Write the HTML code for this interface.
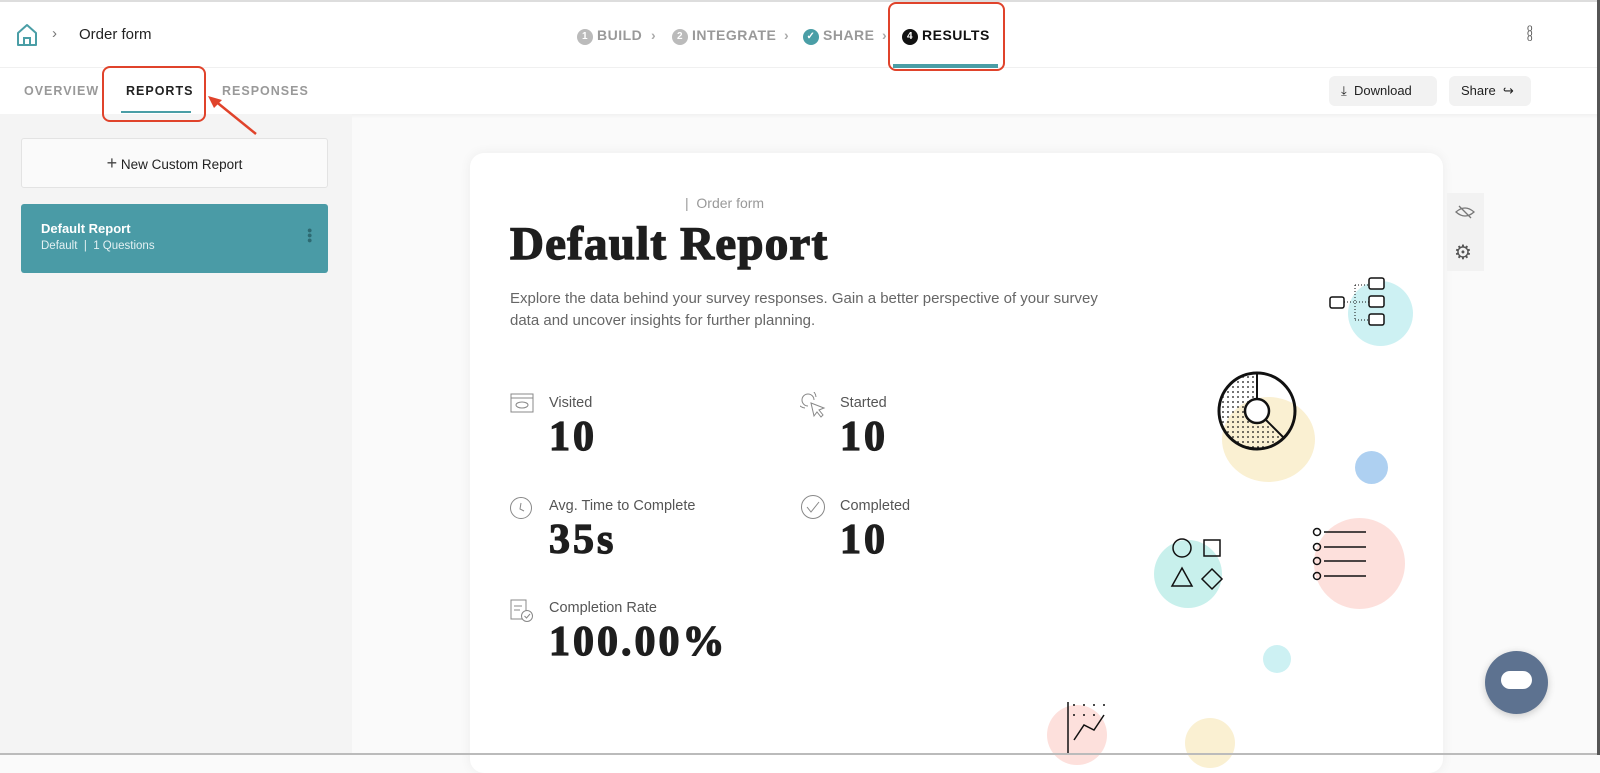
<!DOCTYPE html>
<html><head><meta charset="utf-8"><style>
*{box-sizing:border-box;margin:0;padding:0}
body{width:1600px;height:755px;overflow:hidden;background:#fafafa;font-family:"Liberation Sans",sans-serif;position:relative;color:#222}
.abs{position:absolute}
.hdr{left:0;top:0;width:1600px;height:68px;background:#fff;border-top:2px solid #ddd;border-bottom:1px solid #f0f0f0}
.tabs{left:0;top:68px;width:1600px;height:46px;background:#fff;box-shadow:0 2px 4px rgba(0,0,0,.04)}
.side{left:0;top:114px;width:352px;height:641px;background:#f4f4f4}
.step{top:27px;font-size:14px;letter-spacing:.5px;color:#999;font-weight:bold}
.num{display:inline-block;width:16px;height:16px;border-radius:50%;background:#bbb;color:#fff;font-size:10px;text-align:center;line-height:16px;vertical-align:1px;margin-right:4px}
.tab{top:84px;font-size:12.5px;font-weight:bold;letter-spacing:1px;color:#999}
.btn{top:76px;height:30px;background:#f2f2f2;border-radius:6px;font-size:13px;line-height:30px;color:#222}
.red{border:2px solid #e0432b;border-radius:8px}
.card{left:470px;top:153px;width:973px;height:620px;background:#fff;border-radius:14px;box-shadow:0 0 12px rgba(0,0,0,.06)}
.lbl{font-size:14.5px;color:#555}
.val{font-family:"Liberation Serif",serif;font-weight:bold;font-size:42px;letter-spacing:3px;color:#1e1e1e;-webkit-text-stroke:1.3px #1e1e1e}
.circ{border-radius:50%}
</style></head><body>
<div class="abs hdr"></div>
<svg class="abs" style="left:16px;top:23px" width="22" height="24" viewBox="0 0 22 24"><path d="M2 10 L11 2 L20 10 V22 H2 Z" fill="none" stroke="#4a9ea6" stroke-width="2" stroke-linejoin="round"/><path d="M8 22 V15 H14 V22" fill="none" stroke="#4a9ea6" stroke-width="2"/></svg>
<div class="abs" style="left:52px;top:25px;color:#777;font-size:15px">&#8250;</div>
<div class="abs" style="left:79px;top:26px;font-size:15px;color:#222">Order form</div>
<div class="abs step" style="left:577px"><span class="num">1</span>BUILD</div>
<div class="abs step" style="left:651px;color:#aaa">&#8250;</div>
<div class="abs step" style="left:672px"><span class="num">2</span>INTEGRATE</div>
<div class="abs step" style="left:784px;color:#aaa">&#8250;</div>
<div class="abs step" style="left:803px"><span class="num" style="background:#4a9ea6">&#10003;</span>SHARE</div>
<div class="abs step" style="left:882px;color:#aaa">&#8250;</div>
<div class="abs step" style="left:902px;color:#111"><span class="num" style="background:#111">4</span>RESULTS</div>
<div class="abs" style="left:893px;top:64px;width:105px;height:4px;background:#4a9ea6"></div>
<div class="abs" style="left:1527px;top:26px;font-size:10px;line-height:5px;color:#555">o<br>o<br>o</div>
<div class="abs tabs"></div>
<div class="abs tab" style="left:24px">OVERVIEW</div>
<div class="abs tab" style="left:126px;color:#222">REPORTS</div>
<div class="abs" style="left:121px;top:111px;width:70px;height:2px;background:#4a9ea6"></div>
<div class="abs tab" style="left:222px">RESPONSES</div>
<div class="abs btn" style="left:1329px;width:108px;padding-left:12px">&#10515; &nbsp;Download</div>
<div class="abs btn" style="left:1449px;width:82px;padding-left:12px">Share &nbsp;&#8618;</div>
<div class="abs side"></div>
<div class="abs" style="left:21px;top:138px;width:307px;height:50px;background:#fafafa;border:1px solid #e3e3e3;border-radius:3px;text-align:center;line-height:48px;font-size:13.5px"><span style="font-size:18px;color:#444">+</span> New Custom Report</div>
<div class="abs" style="left:21px;top:204px;width:307px;height:69px;background:#4a9ba6;border-radius:3px;color:#fff">
<div style="position:absolute;left:20px;top:17px;font-size:13px;font-weight:bold">Default Report</div>
<div style="position:absolute;left:20px;top:36px;font-size:11.5px;color:#e3f0f2">Default &nbsp;| &nbsp;1 Questions</div>
<div style="position:absolute;left:286px;top:24px;font-size:9px;line-height:5px;color:#2d6a72">&#9679;<br>&#9679;<br>&#9679;</div></div>
<div class="abs red" style="left:888px;top:2px;width:117px;height:69px"></div>
<div class="abs red" style="left:102px;top:66px;width:104px;height:56px"></div>
<svg class="abs" style="left:200px;top:90px" width="60" height="50"><path d="M56 44 L14 10" stroke="#e0432b" stroke-width="2.5"/><path d="M8 6 L22 10 L14 18 Z" fill="#e0432b"/></svg>
<div class="abs card"></div>
<div class="abs" style="left:1447px;top:193px;width:37px;height:78px;background:#f2f2f2"></div>
<svg class="abs" style="left:1455px;top:204px" width="20" height="16"><path d="M1 8 Q10 0 19 8 Q10 16 1 8 Z" fill="none" stroke="#777" stroke-width="1.3"/><line x1="4" y1="2" x2="16" y2="14" stroke="#777" stroke-width="1.3"/></svg>
<div class="abs" style="left:1454px;top:240px;font-size:20px;color:#555">&#9881;</div>
<div class="abs" style="left:685px;top:195px;font-size:14px;color:#999">| &nbsp;Order form</div>
<div class="abs" style="left:510px;top:217px;font-family:'Liberation Serif',serif;font-weight:bold;font-size:47px;letter-spacing:1.2px;color:#1e1e1e;-webkit-text-stroke:1.4px #1e1e1e">Default Report</div>
<div class="abs" style="left:510px;top:288px;width:600px;font-size:15px;line-height:22px;color:#666">Explore the data behind your survey responses. Gain a better perspective of your survey data and uncover insights for further planning.</div>
<svg class="abs" style="left:510px;top:392px" width="24" height="22"><rect x="1" y="2" width="22" height="18" fill="none" stroke="#888"/><line x1="1" y1="6" x2="23" y2="6" stroke="#888"/><ellipse cx="12" cy="13" rx="6" ry="3" fill="none" stroke="#888"/></svg>
<div class="abs lbl" style="left:549px;top:395px">Visited</div>
<div class="abs val" style="left:549px;top:413px">10</div>
<svg class="abs" style="left:800px;top:392px" width="26" height="26"><path d="M14 8 A6 6 0 1 0 8 14 M16 5 A10 10 0 1 0 5 16" fill="none" stroke="#888"/><path d="M11 11 L24 16 L19 18 L23 23 L21 25 L17 20 L14 24 Z" fill="#fff" stroke="#888"/></svg>
<div class="abs lbl" style="left:840px;top:395px">Started</div>
<div class="abs val" style="left:840px;top:413px">10</div>
<svg class="abs" style="left:509px;top:496px" width="24" height="24"><circle cx="12" cy="12" r="10.5" fill="none" stroke="#888"/><path d="M12 7 L11 13 L15 15" fill="none" stroke="#888"/></svg>
<div class="abs lbl" style="left:549px;top:498px">Avg. Time to Complete</div>
<div class="abs val" style="left:549px;top:516px">35s</div>
<svg class="abs" style="left:800px;top:494px" width="26" height="26"><circle cx="13" cy="13" r="11.5" fill="none" stroke="#888"/><path d="M7 13 L11 18 L19 8" fill="none" stroke="#888"/></svg>
<div class="abs lbl" style="left:840px;top:498px">Completed</div>
<div class="abs val" style="left:840px;top:516px">10</div>
<svg class="abs" style="left:509px;top:597px" width="26" height="26"><rect x="2" y="3" width="15" height="19" fill="none" stroke="#888"/><line x1="5" y1="9" x2="13" y2="9" stroke="#888"/><line x1="5" y1="13" x2="11" y2="13" stroke="#888"/><circle cx="18" cy="19" r="5.5" fill="#fff" stroke="#888"/><path d="M15.5 19 L17.5 21 L21 17" fill="none" stroke="#888"/></svg>
<div class="abs lbl" style="left:549px;top:600px">Completion Rate</div>
<div class="abs val" style="left:549px;top:618px">100.00%</div>
<div class="abs circ" style="left:1348px;top:281px;width:65px;height:65px;background:#cdf1f3"></div>
<svg class="abs" style="left:1328px;top:275px" width="60" height="60"><g fill="#fff" stroke="#111" stroke-width="1.5"><rect x="2" y="22" width="14" height="11" rx="2"/><rect x="41" y="3" width="15" height="11" rx="2"/><rect x="41" y="21" width="15" height="11" rx="2"/><rect x="41" y="39" width="15" height="11" rx="2"/></g><path d="M16 27 H41 M27 10 V45 M27 10 H41 M27 45 H41" stroke="#111" stroke-dasharray="1 2"/></svg>
<div class="abs circ" style="left:1222px;top:397px;width:93px;height:85px;background:#faf0d2"></div>
<svg class="abs" style="left:1216px;top:370px" width="84" height="84"><defs><pattern id="d" width="5" height="5" patternUnits="userSpaceOnUse"><circle cx="2" cy="2" r=".9" fill="#111"/></pattern></defs><circle cx="41" cy="41" r="38" fill="none" stroke="#111" stroke-width="3"/><path d="M41 3 A38 38 0 1 0 68 68 L41 41 Z" fill="url(#d)"/><line x1="41" y1="3" x2="41" y2="41" stroke="#111" stroke-width="2"/><line x1="41" y1="41" x2="68" y2="68" stroke="#111" stroke-width="2"/><circle cx="41" cy="41" r="12" fill="#fff" stroke="#111" stroke-width="2.5"/></svg>
<div class="abs circ" style="left:1355px;top:451px;width:33px;height:33px;background:#aed0f1"></div>
<div class="abs circ" style="left:1154px;top:540px;width:68px;height:68px;background:#c8f0ec"></div>
<svg class="abs" style="left:1168px;top:535px" width="60" height="60"><g fill="none" stroke="#111" stroke-width="1.5"><circle cx="14" cy="13" r="9"/><rect x="36" y="5" width="16" height="16"/><path d="M14 33 L24 51 H4 Z"/><path d="M44 34 L54 44 L44 54 L34 44 Z"/></g></svg>
<div class="abs circ" style="left:1314px;top:518px;width:91px;height:91px;background:#fde0dc"></div>
<svg class="abs" style="left:1310px;top:525px" width="60" height="60"><g stroke="#111" fill="none" stroke-width="1.5"><circle cx="7" cy="7" r="3.5"/><circle cx="7" cy="22" r="3.5"/><circle cx="7" cy="36" r="3.5"/><circle cx="7" cy="51" r="3.5"/><path d="M14 7H56M14 22H56M14 36H56M14 51H56"/></g></svg>
<div class="abs circ" style="left:1263px;top:645px;width:28px;height:28px;background:#cdf1f3"></div>
<div class="abs circ" style="left:1047px;top:705px;width:60px;height:60px;background:#fde0dc"></div>
<svg class="abs" style="left:1064px;top:700px" width="60" height="55"><path d="M4 2 V55" stroke="#111" stroke-width="1.5"/><path d="M10 40 L20 25 L30 30 L40 15" stroke="#111" fill="none" stroke-width="1.5"/><g fill="#111"><circle cx="10" cy="5" r="1"/><circle cx="20" cy="5" r="1"/><circle cx="30" cy="5" r="1"/><circle cx="40" cy="5" r="1"/><circle cx="10" cy="15" r="1"/><circle cx="20" cy="15" r="1"/><circle cx="30" cy="15" r="1"/></g></svg>
<div class="abs circ" style="left:1185px;top:718px;width:50px;height:50px;background:#faf0d2"></div>
<div class="abs circ" style="left:1485px;top:651px;width:63px;height:63px;background:#5d7290;box-shadow:0 2px 8px rgba(0,0,0,.2)"></div>
<div class="abs" style="left:1501px;top:671px;width:31px;height:18px;border-radius:9px;background:#fff"></div>
<div class="abs" style="left:0;top:753px;width:1600px;height:2px;background:#bbb"></div>
<div class="abs" style="left:1597px;top:0;width:3px;height:755px;background:#555"></div>
</body></html>
